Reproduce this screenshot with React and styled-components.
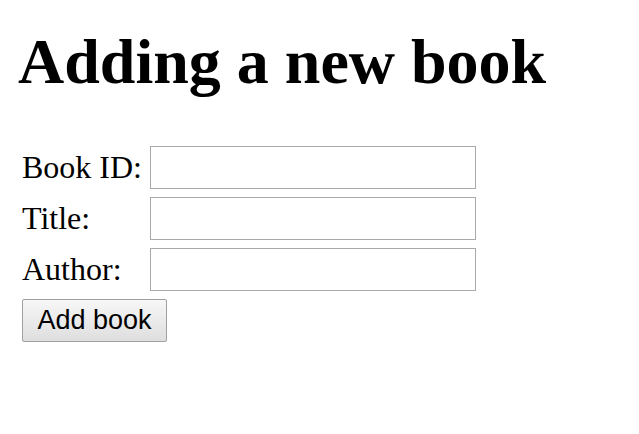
import React from "react";
import styled, { createGlobalStyle } from "styled-components";

const Global = createGlobalStyle`
  html, body { margin: 0; padding: 0; background: #fff; }
  body { font-family: "Liberation Serif", "Times New Roman", serif; color: #000; }
`;

const Page = styled.div`
  padding: 22px 0 0 22px;
`;

const Heading = styled.h1`
  margin: 0 0 0 -4px;
  font-family: "Liberation Serif", "Times New Roman", serif;
  font-weight: bold;
  font-size: 64px;
  line-height: 80px;
`;

const Form = styled.form`
  margin-top: 44px;
  display: grid;
  grid-template-columns: 128px 326px;
  row-gap: 8px;
  align-items: center;
`;

const Label = styled.label`
  font-size: 32px;
  line-height: 43px;
`;

const Input = styled.input`
  box-sizing: border-box;
  width: 326px;
  height: 43px;
  border: 1px solid #a9a9a9;
  background: #fff;
  margin: 0;
  outline: none;
`;

const Button = styled.button`
  grid-column: 1 / span 2;
  justify-self: start;
  box-sizing: border-box;
  width: 145px;
  height: 43px;
  margin: 0;
  padding: 0;
  font-family: "Liberation Sans", Arial, sans-serif;
  font-size: 27px;
  color: #000;
  border: 1px solid #a0a0a0;
  border-radius: 2px;
  background: linear-gradient(#f7f7f7, #dedede);
`;

export default function App() {
  return (
    <>
      <Global />
      <Page>
        <Heading>Adding a new book</Heading>
        <Form onSubmit={(e) => e.preventDefault()}>
          <Label htmlFor="id">Book ID:</Label>
          <Input id="id" />
          <Label htmlFor="title">Title:</Label>
          <Input id="title" />
          <Label htmlFor="author">Author:</Label>
          <Input id="author" />
          <Button type="submit">Add book</Button>
        </Form>
      </Page>
    </>
  );
}
